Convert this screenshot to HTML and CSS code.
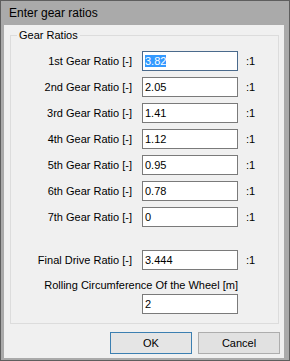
FILE: index.html
```html
<!DOCTYPE html>
<html lang="en">
<head>
    <meta charset="UTF-8">
    <title>Enter gear ratios</title>
    <link rel="stylesheet" href="styles.css">
</head>
<body>

    <div class="window">
        <div class="titlebar">Enter gear ratios</div>

        <div class="client">
            <!-- Gear ratio group -->
            <div class="group">
                <span class="legend">Gear Ratios</span>

                <div class="row">
                    <span class="label">1st Gear Ratio [-]</span>
                    <div class="field focused"><span class="selected">3.82</span></div>
                    <span class="unit">:1</span>
                </div>
                <div class="row">
                    <span class="label">2nd Gear Ratio [-]</span>
                    <div class="field">2.05</div>
                    <span class="unit">:1</span>
                </div>
                <div class="row">
                    <span class="label">3rd Gear Ratio [-]</span>
                    <div class="field">1.41</div>
                    <span class="unit">:1</span>
                </div>
                <div class="row">
                    <span class="label">4th Gear Ratio [-]</span>
                    <div class="field">1.12</div>
                    <span class="unit">:1</span>
                </div>
                <div class="row">
                    <span class="label">5th Gear Ratio [-]</span>
                    <div class="field">0.95</div>
                    <span class="unit">:1</span>
                </div>
                <div class="row">
                    <span class="label">6th Gear Ratio [-]</span>
                    <div class="field">0.78</div>
                    <span class="unit">:1</span>
                </div>
                <div class="row">
                    <span class="label">7th Gear Ratio [-]</span>
                    <div class="field">0</div>
                    <span class="unit">:1</span>
                </div>

                <div class="row final">
                    <span class="label">Final Drive Ratio [-]</span>
                    <div class="field">3.444</div>
                    <span class="unit">:1</span>
                </div>

                <div class="wheel">
                    <span class="wheel-label">Rolling Circumference Of the Wheel [m]</span>
                    <div class="field">2</div>
                </div>
            </div>

            <div class="buttons">
                <button class="btn default">OK</button>
                <button class="btn">Cancel</button>
            </div>
        </div>
    </div>

</body>
</html>
```

FILE: styles.css
```css
body {
    margin: 0;
    font-family: "Liberation Sans", Arial, sans-serif;
    font-size: 11px;
    color: #000;
    background-color: #fff;
}
.window {
    width: 290px;
    height: 361px;
    box-sizing: border-box;
    border: 1px solid #5e5e5e;
    background-color: #aaaaaa;
    padding: 0 5px 2px 3px;
    display: flex;
    flex-direction: column;
}
.titlebar {
    height: 24px;
    line-height: 24px;
    padding-left: 5px;
    font-family: "Liberation Sans", Arial, sans-serif;
    font-size: 12px;
    color: #000;
}
.client {
    flex: 1;
    background-color: #f0f0f0;
    display: flex;
    flex-direction: column;
}
.group {
    position: relative;
    margin: 10px 5px 0 6px;
    padding: 15px 0 9px 0;
    border: 1px solid #dcdcdc;
    display: flex;
    flex-direction: column;
    gap: 6px;
}
.legend {
    position: absolute;
    top: -8px;
    left: 6px;
    padding: 0 2px;
    background-color: #f0f0f0;
    line-height: 14px;
}
.row {
    display: flex;
    align-items: center;
    height: 20px;
}
.row.final {
    margin-top: 17px;
}
.label {
    width: 121px;
    text-align: right;
    margin-right: 10px;
}
.field {
    width: 96px;
    height: 20px;
    box-sizing: border-box;
    border: 1px solid #7a7a7a;
    background-color: #fff;
    padding-left: 2px;
    line-height: 18px;
    white-space: nowrap;
}
.field.focused {
    border-color: #4a6a8c;
}
.selected {
    background-color: #3399ff;
    color: #fff;
}
.unit {
    margin-left: 8px;
}
.wheel {
    margin-top: 3px;
    display: flex;
    flex-direction: column;
    align-items: flex-end;
    gap: 2px;
    padding-right: 40px;
}
.wheel-label {
    line-height: 13px;
}
.buttons {
    display: flex;
    justify-content: flex-end;
    gap: 6px;
    margin-top: 8px;
    padding-right: 4px;
}
.btn {
    width: 82px;
    height: 22px;
    box-sizing: border-box;
    border: 1px solid #adadad;
    background-color: #e1e1e1;
    font-family: "Liberation Sans", Arial, sans-serif;
    font-size: 11px;
    color: #000;
    padding: 0;
}
.btn.default {
    border-color: #3c7fb1;
    background-color: #e5e5e5;
}
```
